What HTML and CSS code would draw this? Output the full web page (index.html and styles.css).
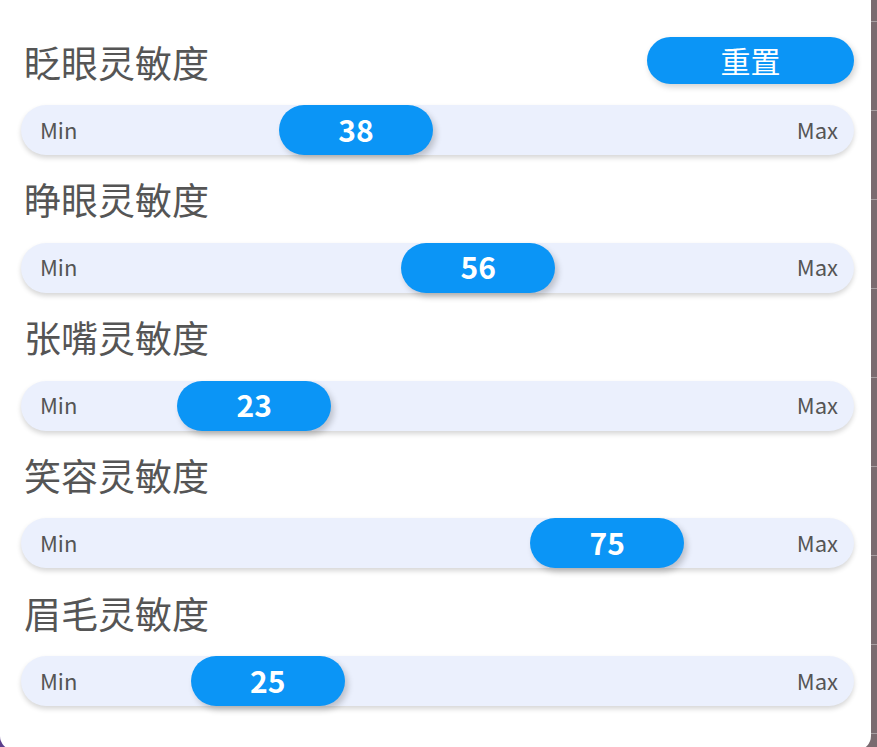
FILE: index.html
```html
<!DOCTYPE html>
<html lang="zh">
<head>
<meta charset="utf-8">
<link rel="stylesheet" href="styles.css">
</head>
<body>
<div class="stage">
  <div class="panel">
    <div class="row">
      <div class="row-head">
        <span class="title">眨眼灵敏度</span>
        <button class="reset">重置</button>
      </div>
      <div class="track">
        <span class="lbl">Min</span><span class="lbl">Max</span>
        <div class="thumb" style="--v:0.38">38</div>
      </div>
    </div>
    <div class="row">
      <div class="row-head"><span class="title">睁眼灵敏度</span></div>
      <div class="track">
        <span class="lbl">Min</span><span class="lbl">Max</span>
        <div class="thumb" style="--v:0.56">56</div>
      </div>
    </div>
    <div class="row">
      <div class="row-head"><span class="title">张嘴灵敏度</span></div>
      <div class="track">
        <span class="lbl">Min</span><span class="lbl">Max</span>
        <div class="thumb" style="--v:0.23">23</div>
      </div>
    </div>
    <div class="row">
      <div class="row-head"><span class="title">笑容灵敏度</span></div>
      <div class="track">
        <span class="lbl">Min</span><span class="lbl">Max</span>
        <div class="thumb" style="--v:0.75">75</div>
      </div>
    </div>
    <div class="row">
      <div class="row-head"><span class="title">眉毛灵敏度</span></div>
      <div class="track">
        <span class="lbl">Min</span><span class="lbl">Max</span>
        <div class="thumb" style="--v:0.25">25</div>
      </div>
    </div>
  </div>
</div>
</body>
</html>
```

FILE: styles.css
```css
* { box-sizing: border-box; }
html, body {
  margin: 0;
  padding: 0;
  width: 877px;
  height: 747px;
  overflow: hidden;
}
body {
  background-color: #7a6b70;
  background-image:
    linear-gradient(to bottom, rgba(255,255,255,0.35) 0 1px, transparent 1px),
    linear-gradient(to right, #5b3f8c 0 10px, transparent 10px);
  background-size: 100% 89px, 100% 100%;
  background-position: 0 21px, 0 0;
  font-family: "Noto Sans CJK SC", sans-serif;
}
.stage {
  width: 877px;
  height: 747px;
}
.panel {
  width: 871px;
  height: 750px;
  background: #ffffff;
  border-radius: 0 0 14px 14px;
  padding: 29px 17px 0 21px;
  display: flex;
  flex-direction: column;
  gap: 11.75px;
}
.row {
  display: flex;
  flex-direction: column;
  gap: 6px;
}
.row-head {
  height: 70px;
  display: flex;
  align-items: center;
  justify-content: space-between;
}
.title {
  font-size: 37px;
  color: #555555;
  padding-left: 3px;
  line-height: 1;
  margin-top: -4px;
}
.reset {
  width: 207px;
  height: 47px;
  margin-top: -7px;
  border: none;
  border-radius: 24px;
  background: #0b95f6;
  color: #ffffff;
  font-family: "Noto Sans CJK SC", sans-serif;
  font-size: 30px;
  line-height: 1;
  padding: 0 0 2px;
  box-shadow: 2px 3px 6px rgba(0,0,0,0.18);
}
.track {
  position: relative;
  height: 50px;
  border-radius: 25px;
  background: #ebf0fd;
  box-shadow: 0 3px 5px rgba(0,0,0,0.16);
  display: flex;
  align-items: center;
  justify-content: space-between;
  padding: 0 16px 3px 19px;
}
.lbl {
  font-size: 22px;
  line-height: 1;
  color: #555555;
}
.thumb {
  position: absolute;
  top: 0;
  left: calc((100% - 154px) * var(--v));
  width: 154px;
  height: 50px;
  border-radius: 25px;
  background: #0b95f6;
  color: #ffffff;
  font-weight: 700;
  font-size: 30px;
  line-height: 1;
  padding-bottom: 3px;
  display: flex;
  align-items: center;
  justify-content: center;
  box-shadow: 3px 4px 6px rgba(0,0,0,0.2);
}
```
